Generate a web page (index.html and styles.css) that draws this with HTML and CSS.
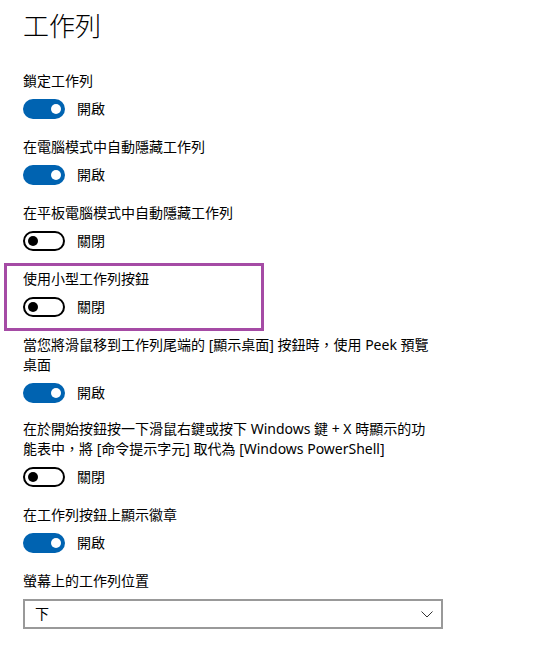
FILE: index.html
```html
<!DOCTYPE html>
<html lang="zh-Hant">
<head>
<meta charset="utf-8">
<link rel="stylesheet" href="styles.css">
</head>
<body>
<div class="page">
  <h1 class="title">工作列</h1>
  <div class="settings">
    <div class="item">
      <div class="label">鎖定工作列</div>
      <div class="toggle-row"><span class="toggle on"><span class="knob"></span></span><span class="state">開啟</span></div>
    </div>
    <div class="item">
      <div class="label">在電腦模式中自動隱藏工作列</div>
      <div class="toggle-row"><span class="toggle on"><span class="knob"></span></span><span class="state">開啟</span></div>
    </div>
    <div class="item">
      <div class="label">在平板電腦模式中自動隱藏工作列</div>
      <div class="toggle-row"><span class="toggle off"><span class="knob"></span></span><span class="state">關閉</span></div>
    </div>
    <div class="item highlight">
      <div class="label">使用小型工作列按鈕</div>
      <div class="toggle-row"><span class="toggle off"><span class="knob"></span></span><span class="state">關閉</span></div>
    </div>
    <div class="item tight">
      <div class="label">當您將滑鼠移到工作列尾端的 [顯示桌面] 按鈕時，使用 Peek 預覽<br>桌面</div>
      <div class="toggle-row"><span class="toggle on"><span class="knob"></span></span><span class="state">開啟</span></div>
    </div>
    <div class="item">
      <div class="label">在於開始按鈕按一下滑鼠右鍵或按下 Windows 鍵 + X 時顯示的功<br>能表中，將 [命令提示字元] 取代為 [Windows PowerShell]</div>
      <div class="toggle-row"><span class="toggle off"><span class="knob"></span></span><span class="state">關閉</span></div>
    </div>
    <div class="item">
      <div class="label">在工作列按鈕上顯示徽章</div>
      <div class="toggle-row"><span class="toggle on"><span class="knob"></span></span><span class="state">開啟</span></div>
    </div>
    <div class="item">
      <div class="label">螢幕上的工作列位置</div>
      <div class="select">
        <span class="select-value">下</span>
        <svg class="chevron" width="12" height="7" viewBox="0 0 12 7"><path d="M0.5 0.5 L6 6 L11.5 0.5" fill="none" stroke="#333" stroke-width="1"/></svg>
      </div>
    </div>
  </div>
</div>
</body>
</html>
```

FILE: styles.css
```css
html, body {
  margin: 0;
  padding: 0;
  background: #ffffff;
}

body {
  font-family: "Noto Sans", "Noto Sans CJK TC", sans-serif;
  color: #000000;
  font-size: 14px;
}

.page {
  padding: 6px 0 0 23px;
}

.title {
  margin: 0;
  font-family: "Noto Sans CJK TC", sans-serif;
  font-weight: 300;
  font-size: 26px;
  line-height: 38px;
}

.settings {
  display: flex;
  flex-direction: column;
  margin-top: 27px;
}

.item {
  display: flex;
  flex-direction: column;
  gap: 8px;
  margin-bottom: 18px;
}

.item.tight {
  margin-bottom: 16px;
}

.label {
  font-size: 14px;
  line-height: 20px;
  white-space: nowrap;
}

.highlight {
  width: 238px;
  margin: -6px 0 4px -19px;
  padding: 3px 0 11px 16px;
  border: 3px solid #a54ba5;
}

.toggle-row {
  display: flex;
  align-items: center;
  height: 20px;
}

.toggle {
  box-sizing: border-box;
  width: 42px;
  height: 20px;
  border-radius: 10px;
  display: flex;
  align-items: center;
  padding: 0 4px;
}

.toggle.on {
  background: #0063b1;
  justify-content: flex-end;
}

.toggle.off {
  border: 2px solid #000000;
  justify-content: flex-start;
  padding: 0 3px;
}

.knob {
  width: 10px;
  height: 10px;
  border-radius: 50%;
}

.toggle.on .knob {
  background: #ffffff;
}

.toggle.off .knob {
  background: #000000;
}

.state {
  margin-left: 12px;
  font-size: 14px;
  line-height: 20px;
}

.select {
  box-sizing: border-box;
  width: 420px;
  height: 30px;
  border: 2px solid #999999;
  display: flex;
  align-items: center;
  justify-content: space-between;
  padding: 0 8px 0 10px;
}

.select-value {
  font-size: 14px;
  line-height: 20px;
}

.chevron {
  display: block;
}
```
